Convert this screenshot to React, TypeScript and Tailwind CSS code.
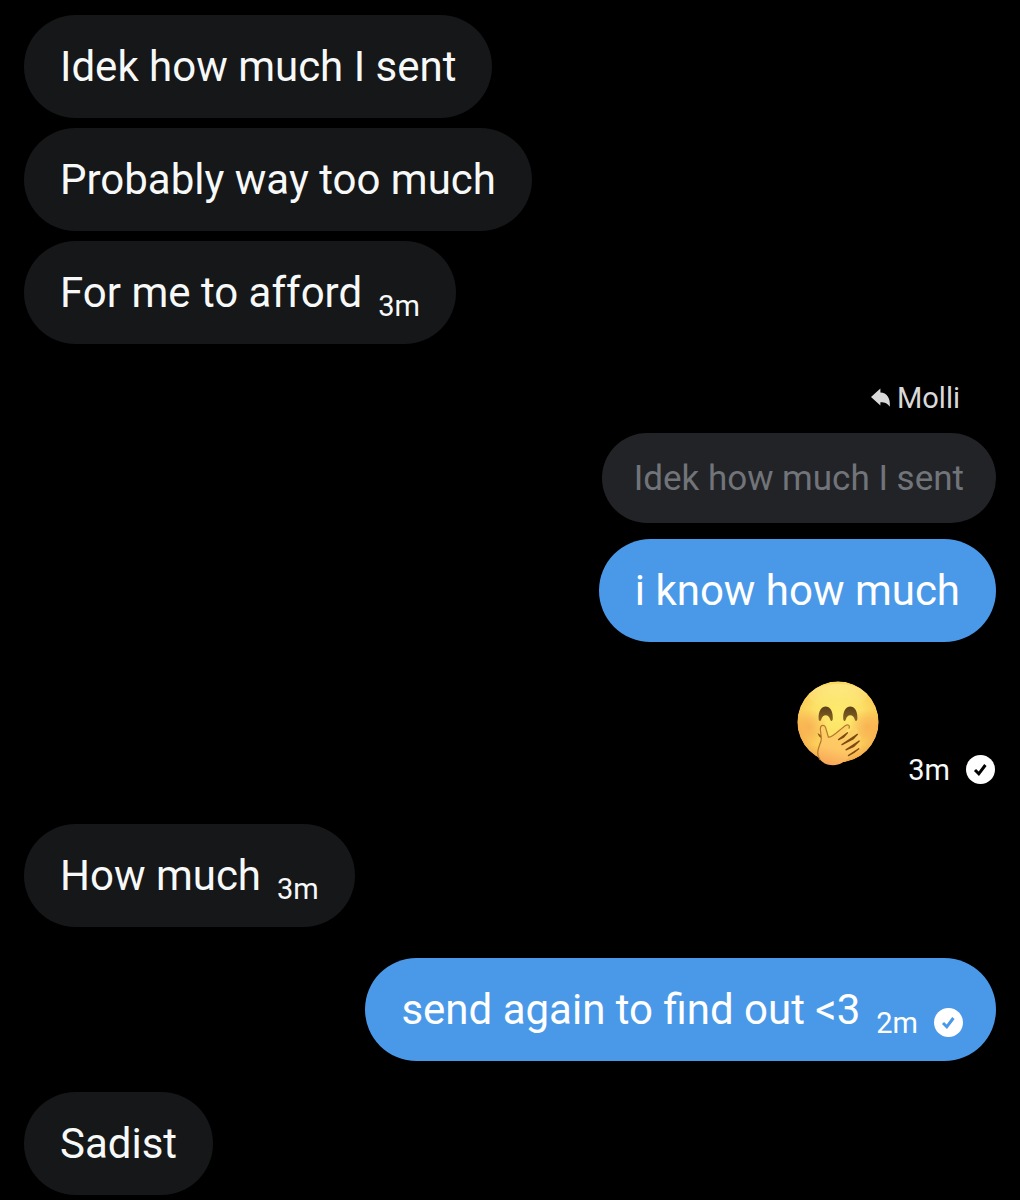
import type { ReactNode } from "react";

type BubbleProps = {
  children: ReactNode;
  time?: string;
  mine?: boolean;
  sent?: boolean;
};

const ReplyIcon = () => (
  <svg viewBox="0 0 20 20" className="size-5" fill="currentColor" aria-hidden="true">
    <path d="M0 9 L9.4 0.4 V4.6 C15.8 4.8 19.6 10 18.8 18.8 C16.8 15.4 14 14.2 9.4 14.2 V17.6 Z" />
  </svg>
);

const SentIcon = ({ mark }: { mark: string }) => (
  <svg viewBox="0 0 30 30" className="-my-1 size-[30px]" role="img" aria-label="Sent">
    <circle cx="14.5" cy="14.5" r="14.5" fill="#fff" />
    <path d="M9 15 L12.8 18.8 L19.4 10" fill="none" stroke={mark} strokeWidth="3" />
  </svg>
);

const GiggleEmoji = () => (
  <svg viewBox="0 0 84 86" className="mb-4 h-[86px] w-[84px]" role="img" aria-label="Face with hand over mouth">
    <defs>
      <clipPath id="head">
        <circle cx="42" cy="41" r="40.7" />
      </clipPath>
      <radialGradient id="face" cx="0.5" cy="0.4" r="0.6">
        <stop offset="0" stopColor="#fdec6e" />
        <stop offset="0.5" stopColor="#fce066" />
        <stop offset="0.78" stopColor="#fbcd58" />
        <stop offset="0.94" stopColor="#f6b552" />
        <stop offset="1" stopColor="#efa540" />
      </radialGradient>
      <radialGradient id="cheek">
        <stop offset="0" stopColor="#f6914a" stopOpacity="0.5" />
        <stop offset="0.5" stopColor="#f6914a" stopOpacity="0.32" />
        <stop offset="1" stopColor="#f6914a" stopOpacity="0" />
      </radialGradient>
      <linearGradient id="shine" x1="0" y1="0" x2="0" y2="1">
        <stop offset="0" stopColor="#fff2a0" stopOpacity="0.5" />
        <stop offset="1" stopColor="#fff2a0" stopOpacity="0" />
      </linearGradient>
      <linearGradient id="eye" x1="0" y1="0" x2="0" y2="1">
        <stop offset="0" stopColor="#59401a" />
        <stop offset="1" stopColor="#8a6524" />
      </linearGradient>
      <linearGradient id="hand" x1="0.6" y1="0" x2="0.3" y2="1">
        <stop offset="0" stopColor="#fdd266" />
        <stop offset="0.6" stopColor="#fec765" />
        <stop offset="1" stopColor="#f8a657" />
      </linearGradient>
    </defs>
    <g clipPath="url(#head)">
      <circle cx="42" cy="41" r="40.7" fill="url(#face)" />
      <ellipse cx="42" cy="15" rx="29" ry="12" fill="url(#shine)" />
      <circle cx="13" cy="46" r="18" fill="url(#cheek)" />
      <circle cx="71" cy="46" r="18" fill="url(#cheek)" />
    </g>
    <path
      d="M22.6 37.5 C22.4 29.6 25.6 25.6 29.7 25.6 C33.8 25.6 37 29.6 36.8 37.5 C36.8 40.4 34.8 40.6 34.2 38.4 C33.2 35.6 31.8 34.2 29.7 34.2 C27.6 34.2 26.2 35.6 25.2 38.4 C24.6 40.6 22.6 40.4 22.6 37.5 Z"
      fill="url(#eye)"
    />
    <path
      d="M47.2 37.5 C47 29.6 50.2 25.6 54.3 25.6 C58.4 25.6 61.6 29.6 61.4 37.5 C61.4 40.4 59.4 40.6 58.8 38.4 C57.8 35.6 56.4 34.2 54.3 34.2 C52.2 34.2 50.8 35.6 49.8 38.4 C49.2 40.6 47.2 40.4 47.2 37.5 Z"
      fill="url(#eye)"
    />
    <path d="M21.6 52 C23.4 53.6 25.6 54.6 28 55 L26.5 57.6 C24 56.6 22 54.6 21.6 52 Z" fill="#8a5213" />
    <path
      d="M24.8 60 C26.2 55 23.6 50.6 24.2 47 C24.8 43.2 28.8 43.2 29.8 46.8 L32.6 56.4 C36.8 56.8 44 48 49.6 44.2 C52.4 42.4 55 45.2 52.8 47.8 L46 54.6 L57.2 48 C61 46.2 63.4 49.8 60.6 52 L51.4 59.2 L61.2 54.6 C64.8 53.2 66.8 57 63.6 59.2 L54.4 66 L61.4 63.4 C65 62.4 66.4 66 63.4 68 C56.4 72.8 52 77.8 46.6 81.6 C39.2 86.4 28.8 84.6 23.8 78.6 C19 72.8 22.6 66.8 24.8 60 Z"
      fill="url(#hand)"
    />
    <path
      d="M24.2 78.8 C19.2 72.8 22.8 66.8 25 60 C26.2 55 23.8 50.6 24.4 47 C25 43.6 28.8 43.4 29.7 46.8 L32.4 56.2 C36.8 56.8 44 48 49.6 44.4 C52.2 42.8 54.6 45 52.8 47.6"
      fill="none"
      stroke="#b5792b"
      strokeWidth="1.2"
    />
    <path
      d="M42.6 58.6 L51.4 51.8 L47.6 56.2 Z M46 63.6 L61.4 53.4 L57 58 Z M50 68.8 L63.2 60 L57.8 65.4 Z M52.4 74.6 L62.8 67.8 L57.6 71.8 Z"
      fill="#7d4a12"
      stroke="#7d4a12"
      strokeWidth="1.3"
      strokeLinejoin="round"
    />
  </svg>
);

const Time = ({ children }: { children: string }) => (
  <time className="text-[29px] leading-[26px]">{children}</time>
);

const Bubble = ({ children, time, mine, sent }: BubbleProps) => (
  <div
    className={`flex max-w-full items-end gap-4 rounded-[52px] pt-[26px] pb-[25px] pl-9 ${
      mine ? "bg-[#4a99e9] text-white" : "bg-[#161719] text-[#f7f9f9]"
    } ${sent ? "pr-8" : "pr-9"}`}
  >
    <p className="text-[42px] leading-[52px]">{children}</p>
    {time && (
      <div className="flex items-center gap-4">
        <Time>{time}</Time>
        {sent && <SentIcon mark="#4a99e9" />}
      </div>
    )}
  </div>
);

const App = () => {
  return (
    <main className="flex min-h-screen flex-col gap-[31px] bg-black px-6 pt-[15px] pb-1 font-['Roboto',sans-serif]">
      <section className="flex flex-col items-start gap-2.5">
        <Bubble>Idek how much I sent</Bubble>
        <Bubble>Probably way too much</Bubble>
        <Bubble time="3m">For me to afford</Bubble>
      </section>

      <section className="flex flex-col items-end pt-1.5 pb-2.5">
        <div className="flex items-center gap-1.5 pr-9 text-[#d9d9d9]">
          <ReplyIcon />
          <span className="text-[29px] leading-[34px]">Molli</span>
        </div>
        <blockquote className="mt-[18px] mb-4 rounded-[45px] bg-[#222327] px-8 pt-[22px] pb-5 text-[35px] leading-[48px] text-[#717479]">
          Idek how much I sent
        </blockquote>
        <Bubble mine>i know how much</Bubble>
        <div className="flex items-end gap-7 pt-[39px] text-[#f7f9f9]">
          <GiggleEmoji />
          <div className="flex items-center gap-4">
            <Time>3m</Time>
            <SentIcon mark="#000" />
          </div>
        </div>
      </section>

      <section className="flex flex-col items-start">
        <Bubble time="3m">How much</Bubble>
      </section>

      <section className="flex flex-col items-end">
        <Bubble mine sent time="2m">
          send again to find out &lt;3
        </Bubble>
      </section>

      <section className="flex flex-col items-start">
        <Bubble>Sadist</Bubble>
      </section>
    </main>
  );
};

export default App;
